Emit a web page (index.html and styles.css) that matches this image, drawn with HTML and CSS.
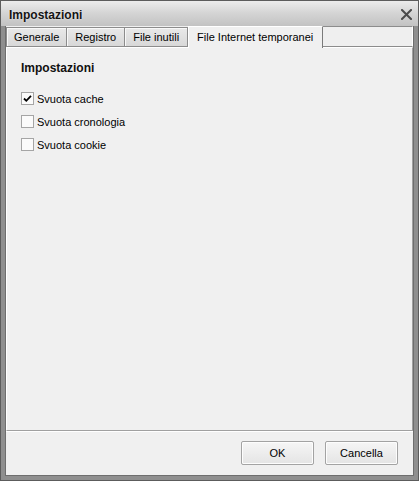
FILE: index.html
```html
<!DOCTYPE html>
<html lang="it">
<head>
<meta charset="utf-8">
<title>Impostazioni</title>
<link rel="stylesheet" href="styles.css">
</head>
<body>
<div class="window">
  <div class="titlebar">
    <span class="title">Impostazioni</span>
    <svg class="close" width="11" height="11" viewBox="0 0 11 11" aria-hidden="true">
      <path d="M1 1 L10 10 M10 1 L1 10" stroke="#4b4b4b" stroke-width="2" stroke-linecap="square" fill="none"/>
    </svg>
  </div>
  <div class="client">
    <div class="tabs">
      <div class="tab tab-first">Generale</div>
      <div class="tab">Registro</div>
      <div class="tab">File inutili</div>
      <div class="tab tab-active">File Internet temporanei</div>
      <div class="tab-fill"></div>
    </div>
    <div class="panel">
      <div class="heading">Impostazioni</div>
      <div class="options">
        <label class="option">
          <span class="check">
            <svg width="11" height="11" viewBox="0 0 11 11" aria-hidden="true">
              <path d="M2 5.5 L4.3 7.8 L9 2.8" stroke="#000" stroke-width="1.8" fill="none"/>
            </svg>
          </span>
          <span class="option-label">Svuota cache</span>
        </label>
        <label class="option">
          <span class="check"></span>
          <span class="option-label">Svuota cronologia</span>
        </label>
        <label class="option">
          <span class="check"></span>
          <span class="option-label">Svuota cookie</span>
        </label>
      </div>
    </div>
    <div class="buttons">
      <button class="btn">OK</button>
      <button class="btn">Cancella</button>
    </div>
  </div>
</div>
</body>
</html>
```
FILE: styles.css
```css
html, body {
  margin: 0;
  padding: 0;
}
body {
  font-family: "Liberation Sans", Arial, sans-serif;
  font-size: 11px;
  color: #000;
  background: #f0f0f0;
}
.window {
  width: 419px;
  height: 481px;
  box-sizing: border-box;
  border: 1px solid #5c5c5c;
  background: #8f8f8f;
  display: flex;
  flex-direction: column;
}
.titlebar {
  height: 25px;
  flex: none;
  display: flex;
  align-items: center;
  justify-content: space-between;
  padding: 0 6px 0 8px;
  background: linear-gradient(#ececec, #d6d6d6 45%, #c2c2c2);
}
.title {
  font-weight: bold;
  font-size: 12px;
  color: #141414;
  padding-top: 2px;
  text-shadow: 0 0 2px rgba(255,255,255,0.8);
}
.close {
  display: block;
  margin-top: 1px;
}
.client {
  flex: 1;
  margin: 0 4px 4px 4px;
  border: 1px solid #6e6e6e;
  border-top: none;
  background: #f0f0f0;
  display: flex;
  flex-direction: column;
}
.tabs {
  height: 21px;
  flex: none;
  display: flex;
  align-items: flex-end;
  position: relative;
  z-index: 1;
}
.tab {
  height: 20px;
  box-sizing: border-box;
  padding: 0 8px;
  line-height: 19px;
  border: 1px solid #8c8c8c;
  border-left: none;
  background: linear-gradient(#e9e9e9, #d8d8d8);
  box-shadow: inset 1px 1px 0 #f8f8f8;
  white-space: nowrap;
  color: #000;
}
.tab-first {
  border-left: 1px solid #8c8c8c;
  padding: 0 7px 0 7px;
}
.tab-active {
  height: 22px;
  margin-bottom: -1px;
  padding: 0 9px 0 9px;
  line-height: 20px;
  background: #f0f0f0;
  border: none;
  border-top: 1px solid #ffffff;
  border-right: 1px solid #7a7a7a;
  box-shadow: inset 1px 0 0 #ffffff;
}
.tab-fill {
  flex: 1;
  height: 21px;
  box-sizing: border-box;
  border-top: 1px solid #8c8c8c;
  border-bottom: 1px solid #8c8c8c;
  border-right: 1px solid #ffffff;
  background: #efefef;
}
.panel {
  flex: 1;
  border-top: 1px solid #ffffff;
  border-left: 1px solid #ffffff;
  border-right: 1px solid #a0a0a0;
  border-bottom: 1px solid #a0a0a0;
  padding: 13px 14px 0 14px;
}
.heading {
  font-weight: bold;
  font-size: 12px;
  line-height: 15px;
  color: #111;
}
.options {
  margin-top: 11px;
  display: flex;
  flex-direction: column;
}
.option {
  height: 23px;
  display: flex;
  align-items: center;
}
.check {
  width: 13px;
  height: 13px;
  box-sizing: border-box;
  border: 1px solid #a5a5a5;
  background: #fbfbfb;
  display: flex;
  align-items: center;
  justify-content: center;
  flex: none;
}
.check svg {
  display: block;
}
.option-label {
  margin-left: 3px;
}
.buttons {
  height: 44px;
  flex: none;
  box-sizing: border-box;
  border-top: 1px solid #ffffff;
  display: flex;
  justify-content: flex-end;
  align-items: flex-start;
  gap: 11px;
  padding: 9px 15px 0 0;
}
.btn {
  width: 73px;
  height: 24px;
  box-sizing: border-box;
  border: 1px solid #a3a3a3;
  border-radius: 2px;
  background: linear-gradient(#f6f6f6, #e4e4e4);
  font-family: "Liberation Sans", Arial, sans-serif;
  font-size: 11px;
  color: #000;
  padding: 0;
  box-shadow: inset 0 0 0 1px #fdfdfd;
}
```
